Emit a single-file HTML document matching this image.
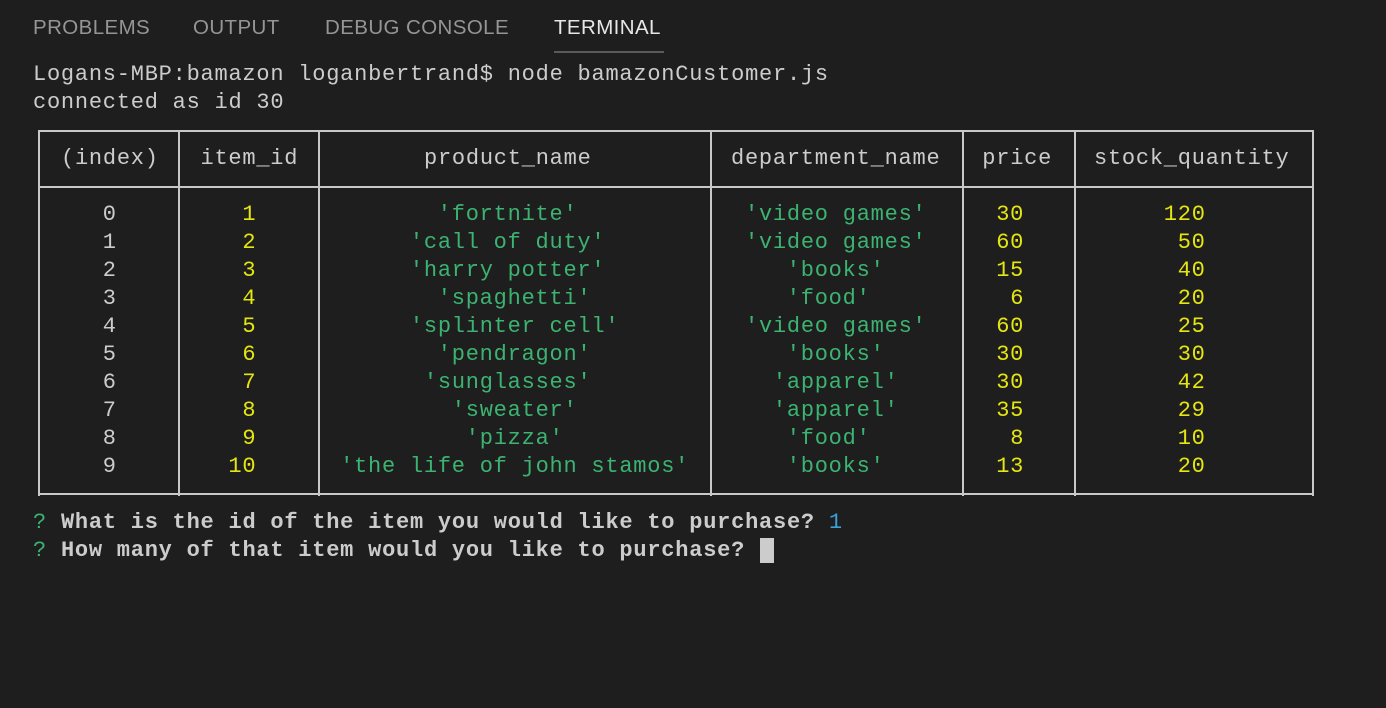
<!DOCTYPE html>
<html><head><meta charset="utf-8"><style>
html,body{margin:0;padding:0;background:#1e1e1e;width:1386px;height:708px;overflow:hidden;position:relative}
.tab{position:absolute;top:16px;font-family:"Liberation Sans",sans-serif;font-size:20.5px;color:#959595;letter-spacing:0.4px}
.r{position:absolute;left:0;width:1386px;height:28px}
.r span,.t{position:absolute;font-family:"Liberation Mono",monospace;font-size:22px;letter-spacing:0.76px;color:#cccccc;white-space:pre;line-height:28px;top:0}
.t{position:absolute}
.r span.y{color:#e5e510}.r span.g,.g{color:#3cb371}.b{color:#3aa0d8}
.h{position:absolute;height:2px;background:#c8c8c8;left:38px;width:1276px}
.v{position:absolute;width:2px;background:#c8c8c8;top:130px;height:366px}
</style></head><body>
<div class="tab" style="left:33px">PROBLEMS</div>
<div class="tab" style="left:193px">OUTPUT</div>
<div class="tab" style="left:325px">DEBUG CONSOLE</div>
<div class="tab" style="left:554px;color:#e7e7e7">TERMINAL</div>
<div style="position:absolute;left:554px;top:51px;width:110px;height:2px;background:#5a5a5a"></div>

<div class="h" style="top:130px"></div>
<div class="h" style="top:186px"></div>
<div class="h" style="top:493px"></div>
<div class="v" style="left:38px"></div>
<div class="v" style="left:178px"></div>
<div class="v" style="left:318px"></div>
<div class="v" style="left:710px"></div>
<div class="v" style="left:962px"></div>
<div class="v" style="left:1074px"></div>
<div class="v" style="left:1312px"></div>

<div class="t" style="left:33px;top:61px">Logans-MBP:bamazon loganbertrand$ node bamazonCustomer.js</div>
<div class="t" style="left:33px;top:89px">connected as id 30</div>

<div class="r" style="top:145px"><span style="left:61px">(index)</span><span style="left:200.5px">item_id</span><span style="left:424px">product_name</span><span style="left:731px">department_name</span><span style="left:982.3px">price</span><span style="left:1094px">stock_quantity</span></div>

<div class="r" style="top:201px"><span style="left:102.8px">0</span><span class="y" style="left:242.4px">1</span><span class="g" style="left:437.8px">'fortnite'</span><span class="g" style="left:745px">'video games'</span><span class="y" style="left:996.2px">30</span><span class="y" style="left:1163.8px">120</span></div>
<div class="r" style="top:229px"><span style="left:102.8px">1</span><span class="y" style="left:242.4px">2</span><span class="g" style="left:409.9px">'call of duty'</span><span class="g" style="left:745px">'video games'</span><span class="y" style="left:996.2px">60</span><span class="y" style="left:1177.7px">50</span></div>
<div class="r" style="top:257px"><span style="left:102.8px">2</span><span class="y" style="left:242.4px">3</span><span class="g" style="left:409.9px">'harry potter'</span><span class="g" style="left:786.8px">'books'</span><span class="y" style="left:996.2px">15</span><span class="y" style="left:1177.7px">40</span></div>
<div class="r" style="top:285px"><span style="left:102.8px">3</span><span class="y" style="left:242.4px">4</span><span class="g" style="left:437.8px">'spaghetti'</span><span class="g" style="left:786.8px">'food'</span><span class="y" style="left:1010.2px">6</span><span class="y" style="left:1177.7px">20</span></div>
<div class="r" style="top:313px"><span style="left:102.8px">4</span><span class="y" style="left:242.4px">5</span><span class="g" style="left:409.9px">'splinter cell'</span><span class="g" style="left:745px">'video games'</span><span class="y" style="left:996.2px">60</span><span class="y" style="left:1177.7px">25</span></div>
<div class="r" style="top:341px"><span style="left:102.8px">5</span><span class="y" style="left:242.4px">6</span><span class="g" style="left:437.8px">'pendragon'</span><span class="g" style="left:786.8px">'books'</span><span class="y" style="left:996.2px">30</span><span class="y" style="left:1177.7px">30</span></div>
<div class="r" style="top:369px"><span style="left:102.8px">6</span><span class="y" style="left:242.4px">7</span><span class="g" style="left:423.9px">'sunglasses'</span><span class="g" style="left:772.9px">'apparel'</span><span class="y" style="left:996.2px">30</span><span class="y" style="left:1177.7px">42</span></div>
<div class="r" style="top:397px"><span style="left:102.8px">7</span><span class="y" style="left:242.4px">8</span><span class="g" style="left:451.8px">'sweater'</span><span class="g" style="left:772.9px">'apparel'</span><span class="y" style="left:996.2px">35</span><span class="y" style="left:1177.7px">29</span></div>
<div class="r" style="top:425px"><span style="left:102.8px">8</span><span class="y" style="left:242.4px">9</span><span class="g" style="left:465.8px">'pizza'</span><span class="g" style="left:786.8px">'food'</span><span class="y" style="left:1010.2px">8</span><span class="y" style="left:1177.7px">10</span></div>
<div class="r" style="top:453px"><span style="left:102.8px">9</span><span class="y" style="left:228.4px">10</span><span class="g" style="left:340.1px">'the life of john stamos'</span><span class="g" style="left:786.8px">'books'</span><span class="y" style="left:996.2px">13</span><span class="y" style="left:1177.7px">20</span></div>

<div class="t" style="left:33px;top:509px"><span class="g">?</span> <b>What is the id of the item you would like to purchase?</b> <span class="b">1</span></div>
<div class="t" style="left:33px;top:537px"><span class="g">?</span> <b>How many of that item would you like to purchase?</b> </div>
<div style="position:absolute;left:760px;top:538px;width:14px;height:25px;background:#cccccc"></div>
</body></html>
